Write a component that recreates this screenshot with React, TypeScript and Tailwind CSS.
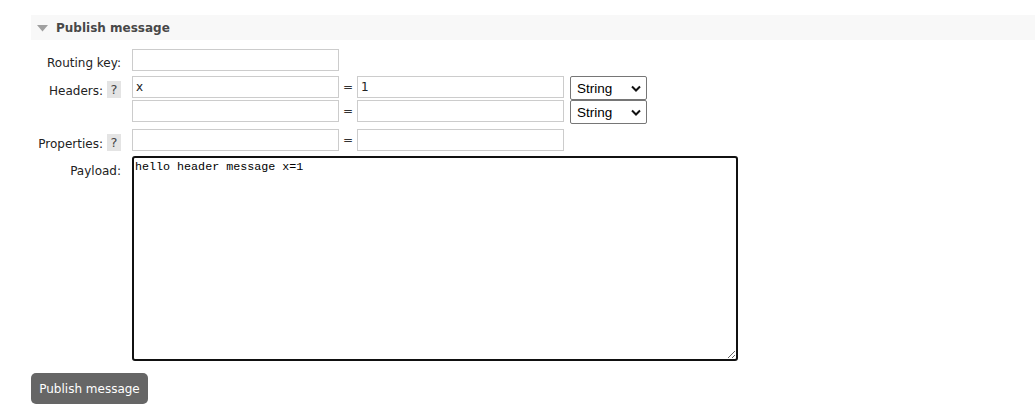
import React from 'react';

const sans = "font-['DejaVu_Sans',Verdana,sans-serif]";

const Input = ({ value = '' }: { value?: string }) => (
    <input
        readOnly
        value={value}
        className={`w-[207px] h-[22px] shrink-0 border border-[#cccccc] bg-white px-[3px] text-[12px] text-[#222] outline-none ${sans}`}
    />
);

const Eq = () => (
    <span className="w-[18px] shrink-0 text-center text-[12px] text-[#333] leading-[22px]">=</span>
);

const Help = () => (
    <span className="ml-[4px] mt-[-3px] flex w-[14px] h-[17px] shrink-0 items-center justify-center bg-[#e4e4e4] text-[13px] leading-[17px] text-[#444]">?</span>
);

const TypeSelect = () => (
    <div className="relative ml-[6px] w-[77px] h-[24px] shrink-0 border border-[#767676] rounded-[2px] bg-white">
        <span className="absolute left-[6px] top-[2px] text-[13.5px] text-black font-['Liberation_Sans',Arial,sans-serif]">String</span>
        <svg className="absolute right-[5px] top-[8px]" width="10" height="7" viewBox="0 0 10 7">
            <path d="M1 1.5 L5 5.5 L9 1.5" fill="none" stroke="#111" strokeWidth="2" />
        </svg>
    </div>
);

const Label = ({ children, top = 'pt-[7px]' }: { children: React.ReactNode; top?: string }) => (
    <div className={`w-[101px] shrink-0 pr-[11px] flex justify-end items-start text-[12px] leading-[14px] text-[#222] ${top}`}>
        {children}
    </div>
);

export default function App() {
    return (
        <div className={`w-[1035px] h-[415px] bg-white pt-[15px] pl-[31px] ${sans}`}>
            <div className="h-[25px] bg-[#f8f8f8] flex items-center pl-[6px]">
                <svg width="11" height="7" viewBox="0 0 11 7" className="mt-[1px]">
                    <path d="M0 0 H11 L5.5 6.5 Z" fill="#a0a0a0" />
                </svg>
                <span className="ml-[8px] text-[12px] font-bold text-[#484848]">Publish message</span>
            </div>

            <div className="mt-[9px] flex items-start h-[22px]">
                <Label>Routing key:</Label>
                <Input />
            </div>

            <div className="mt-[5px] flex items-start">
                <Label top="pt-[8px]">
                    <span>Headers:</span>
                    <Help />
                </Label>
                <div className="flex flex-col">
                    <div className="flex items-start">
                        <Input value="x" />
                        <Eq />
                        <Input value="1" />
                        <TypeSelect />
                    </div>
                    <div className="flex items-start">
                        <Input />
                        <Eq />
                        <Input />
                        <TypeSelect />
                    </div>
                </div>
            </div>

            <div className="mt-[5px] flex items-start h-[22px]">
                <Label top="pt-[8px]">
                    <span>Properties:</span>
                    <Help />
                </Label>
                <Input />
                <Eq />
                <Input />
            </div>

            <div className="mt-[5px] flex items-start">
                <Label top="pt-[8px]">Payload:</Label>
                <textarea
                    readOnly
                    value="hello header message x=1"
                    className="w-[606px] h-[205px] shrink-0 border-2 border-[#111] rounded-[3px] px-[1px] py-0 text-[11.7px] leading-[18px] text-black outline-none font-['Liberation_Mono','Courier_New',monospace]"
                />
            </div>

            <button className="mt-[12px] w-[117px] h-[31px] rounded-[5px] bg-[#666666] text-white text-[12px]">
                Publish message
            </button>
        </div>
    );
}
